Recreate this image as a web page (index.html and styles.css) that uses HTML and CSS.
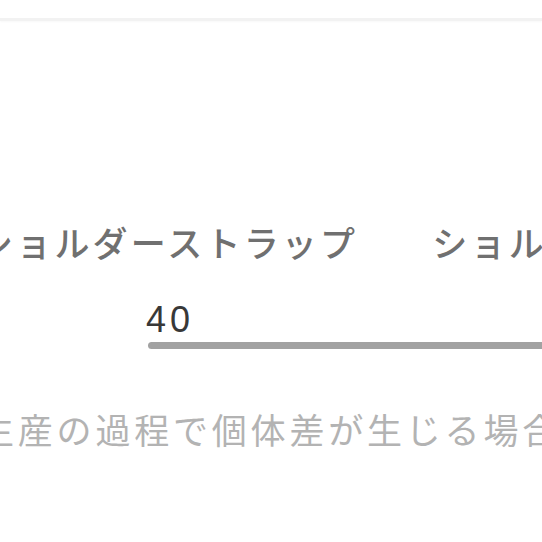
FILE: index.html
```html
<!DOCTYPE html>
<html lang="ja">
<head>
<meta charset="utf-8">
<link rel="stylesheet" href="styles.css">
</head>
<body>
<div class="page">
  <div class="topbar"></div>
  <div class="spec">
    <div class="labels">
      <span class="label">ショルダーストラップ</span>
      <span class="label">ショルダーストラップ</span>
    </div>
    <div class="value">40</div>
    <div class="bar"></div>
  </div>
  <p class="note">生産の過程で個体差が生じる場合があります</p>
</div>
</body>
</html>
```

FILE: styles.css
```css
html, body {
  margin: 0;
  padding: 0;
  background: #ffffff;
}
.page {
  width: 542px;
  height: 542px;
  overflow: hidden;
  font-family: "Noto Sans CJK JP", "Noto Sans", sans-serif;
}
.topbar {
  height: 18px;
  border-bottom: 3px solid #f2f2f2;
  box-shadow: 0 1px 2px rgba(0,0,0,0.03);
}
.spec {
  padding-top: 201px;
}
.labels {
  display: flex;
  gap: 74px;
  margin-left: -22px;
  white-space: nowrap;
  font-size: 35px;
  line-height: 40px;
  letter-spacing: 3.2px;
  font-weight: 500;
  color: #707070;
}
.label {
  flex: none;
}
.value {
  margin-top: 38px;
  padding-left: 146px;
  font-family: "Liberation Sans", Arial, sans-serif;
  font-size: 36px;
  line-height: 40px;
  letter-spacing: 4px;
  color: #383838;
}
.bar {
  margin-top: 2px;
  margin-left: 148px;
  height: 7px;
  border-radius: 4px 0 0 4px;
  background: #a2a2a2;
}
.note {
  margin: 60px 0 0 -21px;
  white-space: nowrap;
  font-size: 35px;
  line-height: 40px;
  letter-spacing: 3.8px;
  color: #b3b3b3;
}
```
